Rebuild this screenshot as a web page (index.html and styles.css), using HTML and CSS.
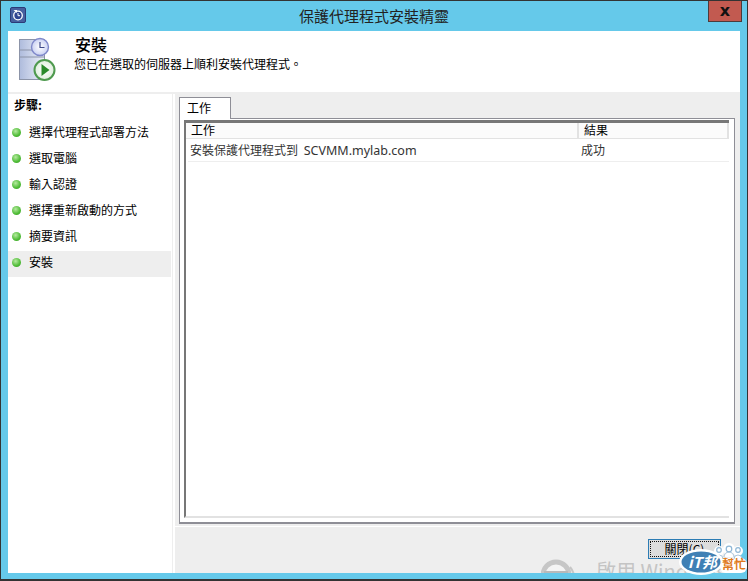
FILE: index.html
```html
<!DOCTYPE html>
<html lang="zh-Hant">
<head>
<meta charset="utf-8">
<title>保護代理程式安裝精靈</title>
<link rel="stylesheet" href="styles.css">
</head>
<body>
<div class="window">
  <div class="titlebar">
    <svg class="app-icon" viewBox="0 0 16 16" width="16" height="16">
      <rect x="0.5" y="0.5" width="15" height="15" rx="1.5" fill="#46609f" stroke="#2b3a78"/>
      <circle cx="8" cy="8.5" r="4.3" fill="#2f4590" stroke="#fff" stroke-width="1.3"/>
      <path d="M8 6v2.700h2" fill="none" stroke="#fff"/>
      <path d="M3.500 3h3.500v3z" fill="#fff"/>
    </svg>
    <div class="title">保護代理程式安裝精靈</div>
    <div class="close">x</div>
  </div>
  <div class="client">
    <header class="banner">
      <svg class="banner-icon" viewBox="0 0 40 46" width="40" height="46">
        <defs>
          <linearGradient id="srv" x1="0" y1="0" x2="1" y2="0"><stop offset="0" stop-color="#aebbdc"/><stop offset="1" stop-color="#eef1fa"/></linearGradient>
          <radialGradient id="face"><stop offset="0" stop-color="#fff"/><stop offset="1" stop-color="#c9d0f2"/></radialGradient>
          <radialGradient id="play"><stop offset="0" stop-color="#fff"/><stop offset="1" stop-color="#dfeedd"/></radialGradient>
        </defs>
        <rect x="1.500" y="4.500" width="25" height="40" fill="url(#srv)" stroke="#8c94a8"/>
        <path d="M2 15h24M2 22h24" stroke="#8c94a8"/>
        <circle cx="22" cy="12" r="8.500" fill="url(#face)" stroke="#7f88c9" stroke-width="1.400"/>
        <path d="M22 7v5.500h4.500" fill="none" stroke="#3f4a8a" stroke-width="1.200"/>
        <circle cx="26.500" cy="35" r="10" fill="url(#play)" stroke="#4f9a4f" stroke-width="2"/>
        <path d="M23.500 29l8 6-8 6z" fill="#2a8a2a"/>
      </svg>
      <div class="banner-text">
        <h1>安裝</h1>
        <p>您已在選取的伺服器上順利安裝代理程式。</p>
      </div>
    </header>
    <div class="main">
      <nav class="steps">
        <div class="steps-title">步驟:</div>
        <ul class="step-list">
          <li class="step"><span class="dot"></span>選擇代理程式部署方法</li>
          <li class="step"><span class="dot"></span>選取電腦</li>
          <li class="step"><span class="dot"></span>輸入認證</li>
          <li class="step"><span class="dot"></span>選擇重新啟動的方式</li>
          <li class="step"><span class="dot"></span>摘要資訊</li>
          <li class="step current"><span class="dot"></span>安裝</li>
        </ul>
      </nav>
      <section class="content">
        <div class="tab-area">
          <div class="tab">工作</div>
          <div class="tab-panel">
            <div class="list">
              <div class="list-head">
                <div class="col-task">工作</div>
                <div class="col-result">結果</div>
              </div>
              <div class="list-row">
                <div class="col-task">安裝保護代理程式到 <span class="latin">SCVMM.mylab.com</span></div>
                <div class="col-result">成功</div>
              </div>
            </div>
          </div>
        </div>
        <div class="footer">
          <button class="btn"><span class="btn-inner">關閉(C)</span></button>
        </div>
      </section>
    </div>
    <div class="watermark">
      <svg class="wm-icon" viewBox="0 0 34 34" width="34" height="34">
        <circle cx="15" cy="17" r="13" fill="#f4f4f4" stroke="#c6c6c6" stroke-width="5"/>
        <path d="M3 13h24v16H3z" fill="#b9b9b9"/>
        <path d="M29 9a16 16 0 0 1 4 12" fill="none" stroke="#c6c6c6" stroke-width="2"/>
      </svg>
      <span>啟用 Windows</span>
    </div>
  </div>
  <svg class="logo" viewBox="0 0 70 46" width="70" height="46">
    <rect x="42" y="23" width="27" height="15" rx="6" fill="#fff"/>
    <circle cx="41" cy="16" r="5" fill="#fff"/><circle cx="51" cy="14" r="6" fill="#fff"/><circle cx="60" cy="16" r="5" fill="#fff"/>
    <path d="M37 24a4 4 0 0 1 8 0M46 22a5 5 0 0 1 10 0M56 24a4 4 0 0 1 8 0" fill="#fff" stroke="#a8c4dc"/>
    <circle cx="41" cy="15" r="2.300" fill="none" stroke="#8fb7d6" stroke-width="1.200"/>
    <circle cx="51" cy="14" r="2.800" fill="none" stroke="#8fb7d6" stroke-width="1.200"/>
    <circle cx="60" cy="15" r="2.300" fill="none" stroke="#8fb7d6" stroke-width="1.200"/>
    <ellipse cx="23" cy="27" rx="22" ry="13" fill="#fff"/>
    <ellipse cx="23" cy="27" rx="19.500" ry="10.500" fill="#3f80b5"/>
    <text x="10" y="33" class="logo-it">iT邦</text>
    <text x="44" y="34" class="logo-help">幫忙</text>
  </svg>
</div>
</body>
</html>
```
FILE: styles.css
```css
* { box-sizing: border-box; }
html, body { margin: 0; padding: 0; }
body {
  width: 748px;
  height: 581px;
  overflow: hidden;
  font: 12px/16px "Noto Sans CJK TC", "Liberation Sans", sans-serif;
  color: #111;
}
.window {
  position: relative;
  width: 748px;
  height: 581px;
  background: #65c9ea;
  border: 1px solid #333;
  border-bottom-width: 2px;
  display: flex;
  flex-direction: column;
  padding: 0 7px 6px;
  overflow: hidden;
}
.titlebar {
  height: 30px;
  flex: none;
  display: flex;
  justify-content: center;
  position: relative;
}
.app-icon { position: absolute; left: 2px; top: 6px; }
.title {
  margin-top: 5px;
  font-size: 15px;
  line-height: 20px;
  color: #222;
}
.close {
  position: absolute;
  right: -2px;
  top: 0;
  width: 34px;
  height: 21px;
  background: #c25a50;
  border: 1px solid #4d3a3a;
  border-top: 0;
  text-align: center;
  font: bold 16px/19px "DejaVu Sans", sans-serif;
  color: #111;
}
.client {
  flex: 1;
  min-height: 0;
  position: relative;
  overflow: hidden;
  display: flex;
  flex-direction: column;
  background: #fff;
}
.banner {
  height: 63px;
  flex: none;
  border-bottom: 2px solid #eee;
  display: flex;
  padding: 3px 0 0 10px;
}
.banner-icon { flex: none; margin-top: 1px; }
.banner-text { margin-left: 16px; }
.banner-text h1 {
  margin: 0 0 0 1px;
  font-size: 16px;
  line-height: 21px;
  font-weight: 500;
  color: #000;
}
.banner-text p { margin: 1px 0 0; line-height: 16px; color: #000; }
.main { flex: 1; min-height: 0; display: flex; }
.steps {
  width: 165px;
  flex: none;
  border-right: 1px solid #eee;
}
.steps-title {
  padding: 3px 0 0 6px;
  height: 27px;
  font-weight: 700;
  color: #000;
}
.step-list { list-style: none; margin: 0; padding: 0; }
.step {
  height: 26px;
  width: 163px;
  display: flex;
  align-items: center;
  color: #000;
  padding: 0 0 4px 4px;
}
.step.current { background: #eee; }
.dot {
  width: 9px;
  height: 9px;
  border-radius: 50%;
  margin-right: 8px;
  background: radial-gradient(circle at 40% 35%, #b6eaa0, #4dbb35 60%, #3a9a28);
}
.content {
  flex: 1;
  margin-left: 2px;
  background: #eee;
  display: flex;
  flex-direction: column;
  min-width: 0;
}
.tab-area {
  height: 432px;
  flex: none;
  padding: 3px 5px 0 4px;
}
.tab {
  width: 52px;
  height: 22px;
  background: #fff;
  border: 1px solid #8e8e96;
  border-bottom: 0;
  padding: 2px 0 0 7px;
  position: relative;
  z-index: 1;
  margin-bottom: -1px;
  color: #000;
}
.tab-panel {
  height: 406px;
  background: #fff;
  border: 1px solid #8e8e96;
  border-bottom-width: 2px;
  padding: 1px 5px 4px 4px;
}
.list {
  height: 100%;
  border: 2px solid #e2e2e2;
  border-top: 3px solid #777;
  border-left-color: #777;
  border-right: 0;
  background: #fff;
}
.list-head {
  height: 16px;
  line-height: 14px;
  background: #fbfbfb;
  border-bottom: 1px solid #e2e2e2;
  display: flex;
  color: #000;
}
.list-row {
  height: 23px;
  margin-left: 2px;
  border-bottom: 1px solid #eee;
  display: flex;
  align-items: center;
  color: #333;
}
.col-task { flex: none; }
.list-row .col-task { width: 391px; padding-left: 2px; }
.list-head .col-task { width: 393px; padding-left: 5px; border-right: 2px solid #e2e2e2; }
.list-head .col-result { flex: 1; padding-left: 5px; border-right: 2px solid #e2e2e2; }
.list-row .col-result { padding-left: 2px; }
.latin { font: 12.5px/16px "Noto Sans", sans-serif; margin-left: 3px; }
.footer {
  flex: 1;
  border-top: 1px solid #fff;
  display: flex;
  justify-content: flex-end;
  align-items: flex-start;
  padding: 12px 19px 0 0;
}
.btn {
  width: 73px;
  height: 20px;
  padding: 1px;
  background: #ddd;
  border: 1px solid #2c7cb4;
  font: inherit;
  color: #000;
}
.btn-inner {
  display: block;
  height: 16px;
  border: 1px dotted #111;
  line-height: 14px;
}
.watermark {
  position: absolute;
  left: 533px;
  top: 527px;
  display: flex;
  align-items: flex-start;
  gap: 21px;
  color: #c4c4c4;
  font-size: 20px;
  line-height: 26px;
  white-space: nowrap;
}
.wm-icon { flex: none; }
.logo { position: absolute; left: 677px; top: 534px; }
.logo-it { font: italic bold 15px "Noto Sans CJK TC", sans-serif; fill: #fff; }
.logo-help { font: 700 12px "Noto Sans CJK TC", sans-serif; fill: #e07a20; }
```
